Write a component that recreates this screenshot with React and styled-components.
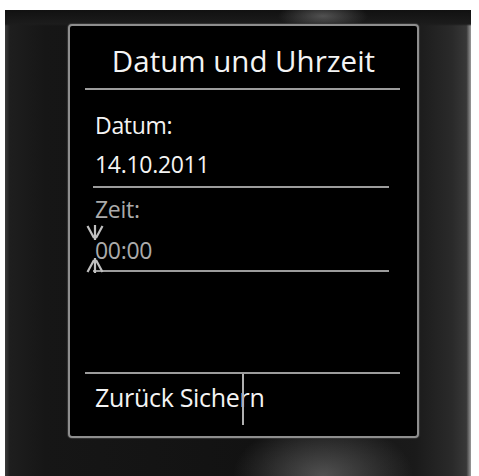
import styled, { createGlobalStyle } from "styled-components"

const Global = createGlobalStyle`
    body {
        margin: 0;
        background: #fff;
        font-family: "Open Sans", "Liberation Sans", sans-serif;
    }
`

const App = () => {
    return(
        <>
            <Global />
            <Phone>
                <Screen>
                    <Title>Datum und Uhrzeit</Title>
                    <Rule wide />
                    <Content>
                        <Field>Datum:</Field>
                        <Field>14.10.2011</Field>
                        <Rule gap={2} />
                        <Field dim gap={2}>Zeit:</Field>
                        <TimeField dim gap={2}>
                            <Cursor viewBox="0 0 18 48" width="18" height="48">
                                <path d="M1.5 1 L8 13 M9 0 L9 15 M16.5 1 L10 13" />
                                <path d="M8 35 L1.5 47 M9 33 L9 48 M10 35 L16.5 47" />
                            </Cursor>
                            00:00
                        </TimeField>
                        <Rule />
                    </Content>
                    <Rule wide />
                    <Footer>
                        Zurück Sichern
                        <KeySplit />
                    </Footer>
                </Screen>
            </Phone>
        </>
    )
}

const Phone = styled.div`
    margin: 10px 0 0 5px;
    width: 466px;
    height: 466px;
    box-sizing: border-box;
    padding: 14px 0 0 63px;
    background:
        radial-gradient(ellipse 45px 14px at 318px 6px, rgba(130,130,130,0.55), transparent),
        radial-gradient(ellipse 90px 55px at 318px 100%, rgba(120,120,120,0.6), transparent),
        linear-gradient(180deg, #111 0, #1c1c1c 14px, transparent 16px),
        linear-gradient(90deg, #3c3c3c 0, #1e1e1e 5px, #161616 40px, #121212 55%, #1a1a1a 88%, #2a2a2a 96%, #383838 99%, #9a9a9a 100%);
`

const Screen = styled.div`
    width: 351px;
    height: 414px;
    box-sizing: border-box;
    border: 2px solid #8e8e8e;
    border-radius: 4px;
    background: #000;
    box-shadow: 0 0 1px 1px rgba(60,60,60,0.8);
    display: flex;
    flex-direction: column;
    color: #f4f4f4;
`

const Title = styled.div`
    padding-top: 8px;
    height: 62px;
    box-sizing: border-box;
    line-height: 54px;
    font-size: 29.5px;
    text-align: center;
`

const Rule = styled.div`
    height: 2px;
    flex: none;
    background: #9c9c9c;
    margin: ${p => p.wide ? "0 17px 0 15px" : "0 28px 0 23px"};
    margin-top: ${p => p.gap || 0}px;
`

const Content = styled.div`
    flex: 1;
    padding-top: 16px;
    display: flex;
    flex-direction: column;
`

const Field = styled.div`
    padding-left: 25px;
    margin-top: ${p => p.gap || 0}px;
    font-size: 23px;
    letter-spacing: -0.3px;
    line-height: 39px;
    color: ${p => p.dim ? "#ababab" : "#f4f4f4"};
`

const TimeField = styled(Field)`
    position: relative;
`

const Cursor = styled.svg`
    position: absolute;
    left: 16px;
    top: -6px;
    fill: none;
    stroke: #c0c0c0;
    stroke-width: 2.2;
`

const Footer = styled.div`
    position: relative;
    flex: none;
    height: 62px;
    box-sizing: border-box;
    padding: 5px 0 0 25px;
    font-size: 25px;
    letter-spacing: -0.3px;
    line-height: 37px;
`

const KeySplit = styled.span`
    position: absolute;
    left: 172px;
    top: 0;
    width: 1.5px;
    height: 51px;
    background: #b0b0b0;
`

export default App
